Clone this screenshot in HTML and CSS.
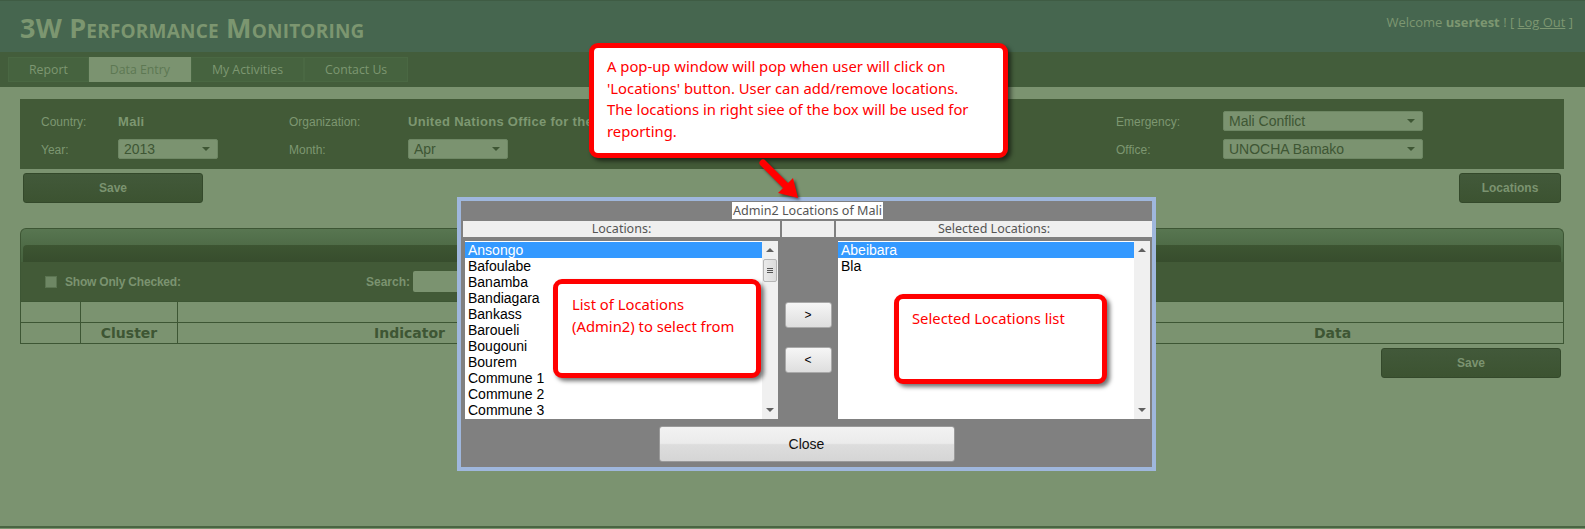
FILE: index.html
```html
<!DOCTYPE html>
<html lang="en">
<head>
<meta charset="utf-8">
<title>3W Performance Monitoring</title>
<link rel="stylesheet" href="styles.css">
</head>
<body>
<div class="page">
  <header class="topbar">
    <h1 class="brand">3W Performance Monitoring</h1>
    <div class="welcome">Welcome <b>usertest</b> ! [ <a href="#">Log Out</a> ]</div>
  </header>
  <nav class="tabs">
    <a class="tab" href="#">Report</a>
    <a class="tab active" href="#">Data Entry</a>
    <a class="tab" href="#">My Activities</a>
    <a class="tab" href="#">Contact Us</a>
  </nav>

  <main class="content">
    <section class="filters">
      <span class="flabel">Country:</span>
      <span class="fvalue">Mali</span>
      <span class="flabel">Organization:</span>
      <span class="fvalue">United Nations Office for the</span>
      <span class="flabel">Emergency:</span>
      <div class="select big"><span>Mali Conflict</span><i class="caret"></i></div>

      <span class="flabel">Year:</span>
      <div class="select"><span>2013</span><i class="caret"></i></div>
      <span class="flabel">Month:</span>
      <div class="select"><span>Apr</span><i class="caret"></i></div>
      <span class="flabel">Office:</span>
      <div class="select big"><span>UNOCHA Bamako</span><i class="caret"></i></div>
    </section>

    <div class="actions">
      <button class="btn btn-save">Save</button>
      <button class="btn btn-loc">Locations</button>
    </div>

    <section class="gridpanel">
      <div class="gp-head"><div class="gp-strip"></div></div>
      <div class="gp-tools">
        <label class="chk"><span class="box"></span>Show Only Checked:</label>
        <label class="search">Search: <span class="search-input"></span></label>
      </div>
      <table class="gp-table">
        <tr class="r1"><td class="c1"></td><td class="c2"></td><td colspan="3"></td></tr>
        <tr class="r2"><th class="c1"></th><th class="c2">Cluster</th><th class="c3">Indicator</th><th class="c4"></th><th class="c5">Data</th></tr>
      </table>
    </section>

    <div class="actions end">
      <button class="btn btn-save2">Save</button>
    </div>
  </main>

  <div class="popup">
    <div class="pop-title"><span>Admin2 Locations of Mali</span></div>
    <div class="pop-grid">
      <div class="pop-head">Locations:</div>
      <div class="pop-head"></div>
      <div class="pop-head">Selected Locations:</div>

      <div class="listbox">
        <div class="items">
          <div class="item sel">Ansongo</div>
          <div class="item">Bafoulabe</div>
          <div class="item">Banamba</div>
          <div class="item">Bandiagara</div>
          <div class="item">Bankass</div>
          <div class="item">Baroueli</div>
          <div class="item">Bougouni</div>
          <div class="item">Bourem</div>
          <div class="item">Commune 1</div>
          <div class="item">Commune 2</div>
          <div class="item">Commune 3</div>
        </div>
        <div class="sbar">
          <span class="arr up"></span>
          <span class="thumb"><i></i><i></i><i></i></span>
          <span class="arr down"></span>
        </div>
      </div>
      <div class="movers">
        <button class="mv">&gt;</button>
        <button class="mv">&lt;</button>
      </div>
      <div class="listbox">
        <div class="items">
          <div class="item sel">Abeibara</div>
          <div class="item">Bla</div>
        </div>
        <div class="sbar">
          <span class="arr up"></span>
          <span class="arr down"></span>
        </div>
      </div>
    </div>
    <div class="pop-foot"><button class="close">Close</button></div>
  </div>

  <div class="callout c-top">A pop-up window will pop when user will click on<br>'Locations' button. User can add/remove locations.<br>The locations in right siee of the box will be used for<br>reporting.</div>
  <div class="callout c-left">List of Locations<br>(Admin2) to select from</div>
  <div class="callout c-right">Selected Locations list</div>

  <svg class="arrow" width="52" height="48" viewBox="0 0 52 48">
    <line x1="8" y1="5" x2="31" y2="28" stroke="#ff0000" stroke-width="7" stroke-linecap="round"/>
    <polygon points="23,35 38,20 43,40" fill="#ff0000"/>
  </svg>
</div>
</body>
</html>
```
FILE: styles.css
```css
* { box-sizing: border-box; }
html, body { margin: 0; padding: 0; }
body {
  background: #7b9370;
  font-family: "Liberation Sans", Arial, sans-serif;
  width: 1585px;
  height: 529px;
  overflow: hidden;
}
.page {
  position: relative;
  height: 528px;
  border-bottom: 2px solid #4a6542;
}

/* header */
.topbar {
  height: 52px;
  background: #46664f;
  border-top: 1px solid #3f5c44;
  display: flex;
  justify-content: space-between;
  align-items: flex-start;
  padding: 0 12px 0 20px;
}
.brand {
  margin: 11px 0 0;
  font-family: "Open Sans", "Noto Sans", sans-serif;
  font-variant: small-caps;
  font-weight: 700;
  font-size: 27px;
  letter-spacing: 0.2px;
  color: #7c9670;
  line-height: 32px;
}
.welcome {
  margin-top: 12px;
  font-family: "Open Sans", "Noto Sans", sans-serif;
  font-size: 13px;
  color: #7d9771;
}
.welcome b { font-weight: 700; }
.welcome a { color: #7d9771; text-decoration: underline; }

/* tabs */
.tabs {
  height: 35px;
  background: #435d3b;
  padding: 5px 0 0 8px;
  display: flex;
}
.tab {
  height: 25px;
  line-height: 24px;
  padding: 0 20px;
  background: #46633f;
  border: 1px solid #4a6843;
  font-family: "Open Sans", "Noto Sans", sans-serif;
  font-size: 12.3px;
  color: #7d9771;
  text-decoration: none;
}
.tab.active { background: #7b9370; border-color: #7b9370; color: #5d7853; }

/* content */
.content { padding: 12px 21px 0 20px; }

.filters {
  background: #425a37;
  height: 70px;
  padding: 12px 0 0 21px;
  display: grid;
  grid-template-columns: 77px 171px 119px 708px 107px 200px;
  grid-template-rows: 20px 20px;
  row-gap: 8px;
  align-items: center;
}
.flabel { font-size: 12px; color: #7d9771; padding-top: 2px; }
.fvalue { font-size: 13px; font-weight: 700; color: #7d9771; letter-spacing: 0.3px; white-space: nowrap; padding-top: 1px; }
.select {
  width: 100px;
  height: 20px;
  background: #7b9370;
  border: 1px solid #6e8764;
  border-radius: 2px;
  display: flex;
  align-items: center;
  justify-content: space-between;
  padding: 0 7px 0 5px;
  font-size: 14px;
  color: #3e5634;
}
.select.big { width: 200px; }
.caret {
  width: 0; height: 0;
  border-left: 4px solid transparent;
  border-right: 4px solid transparent;
  border-top: 4px solid #3e5634;
}

.actions { display: flex; justify-content: space-between; margin-top: 4px; padding: 0 3px; }
.actions.end { justify-content: flex-end; margin-top: 4px; }
.btn {
  height: 30px;
  background: linear-gradient(#42593a, #3c5331);
  border: 1px solid #34492b;
  border-radius: 3px;
  color: #7b9370;
  font-family: "Liberation Sans", Arial, sans-serif;
  font-weight: 700;
  font-size: 12px;
  padding: 0;
}
.btn-save { width: 180px; }
.btn-loc { width: 102px; }
.btn-save2 { width: 180px; }

/* grid panel */
.gridpanel { margin-top: 25px; }
.gp-head {
  height: 34px;
  border: 1px solid #3d5634;
  border-bottom: none;
  border-radius: 6px 6px 0 0;
  background: linear-gradient(#587651, #45613d);
  padding: 16px 2px 0 2px;
}
.gp-strip {
  height: 18px;
  background: linear-gradient(#3d5532, #374d2d);
  border-radius: 4px 4px 0 0;
  border-bottom: 1px solid #587250;
}
.gp-tools {
  height: 39px;
  background: #425a37;
  border-left: 1px solid #3d5634;
  border-right: 1px solid #3d5634;
  display: flex;
  align-items: center;
  padding: 0 0 0 24px;
  font-size: 12px;
  font-weight: 700;
  color: #7b9370;
}
.chk { display: flex; align-items: center; width: 321px; letter-spacing: -0.2px; }
.box {
  width: 12px; height: 12px;
  background: #6e8764;
  border: 1px solid #5b7451;
  margin-right: 8px;
}
.search { display: flex; align-items: center; }
.search-input {
  width: 60px; height: 21px;
  background: #7b9370;
  border-radius: 2px;
  margin-left: 3px;
}
.gp-table {
  width: 100%;
  border-collapse: collapse;
}
.gp-table td, .gp-table th {
  border: 1px solid #3d5634;
  padding: 0;
}
.gp-table .r1 td { height: 21px; }
.gp-table .r2 th {
  height: 21px;
  font-family: "DejaVu Sans", Verdana, sans-serif;
  font-size: 14px;
  font-weight: 700;
  color: #3e5634;
}
.c1 { width: 60px; }
.c2 { width: 97px; }
.c3 { width: 464px; }
.c4 { width: 460px; }

/* popup */
.popup {
  position: absolute;
  left: 457px;
  top: 197px;
  width: 699px;
  height: 274px;
  background: #808080;
  border: 4px solid #9fb7dd;
  padding: 3px 0 0 2px;
  font-family: "Noto Sans", "Liberation Sans", sans-serif;
}
.pop-title { height: 14px; text-align: center; line-height: 14px; font-size: 12.6px; }
.pop-title span { background: #fff; color: #555; padding: 0 1px; }
.pop-grid {
  margin-top: 3px;
  display: grid;
  grid-template-columns: 317px 52px 316px;
  grid-template-rows: 16px 178px;
  column-gap: 2px;
  row-gap: 4px;
}
.pop-head {
  background: #efefef;
  color: #555;
  font-size: 12.5px;
  line-height: 16px;
  text-align: center;
}
.listbox {
  margin: 0 2px;
  background: #fff;
  display: flex;
}
.items { flex: 1; padding-top: 1px; }
.item {
  height: 16px;
  line-height: 16px;
  font-family: "Liberation Sans", Arial, sans-serif;
  font-size: 14px;
  color: #000;
  padding-left: 3px;
}
.item.sel { background: #3399ff; color: #fff; }
.sbar {
  width: 16px;
  background: #f0f0f0;
  position: relative;
}
.arr {
  position: absolute;
  left: 4px;
  width: 0; height: 0;
  border-left: 4px solid transparent;
  border-right: 4px solid transparent;
}
.arr.up { top: 7px; border-bottom: 4px solid #606060; }
.arr.down { bottom: 7px; border-top: 4px solid #606060; }
.thumb {
  position: absolute;
  top: 18px; left: 1px;
  width: 14px; height: 23px;
  background: linear-gradient(90deg, #eaeaea, #dcdcdc);
  border: 1px solid #b5b5b5;
  border-radius: 2px;
  display: flex;
  flex-direction: column;
  align-items: center;
  justify-content: center;
  gap: 1px;
}
.thumb i { display: block; width: 6px; height: 1px; background: #555; }
.movers {
  display: flex;
  flex-direction: column;
  align-items: center;
  padding-top: 61px;
  gap: 19px;
}
.mv {
  width: 47px;
  height: 26px;
  background: linear-gradient(#f6f6f6, #dedede);
  border: 1px solid #a9a9a9;
  border-radius: 3px;
  font-family: "Liberation Sans", Arial, sans-serif;
  font-size: 12px;
  color: #000;
  padding: 0;
}
.pop-foot { display: flex; justify-content: center; margin-top: 7px; padding-right: 2px; }
.close {
  width: 296px;
  height: 36px;
  background: linear-gradient(#f2f2f2 0%, #ebebeb 48%, #dddddd 52%, #d5d5d5 100%);
  border: 1px solid #9a9a9a;
  border-radius: 3px;
  font-family: "Liberation Sans", Arial, sans-serif;
  font-size: 14px;
  color: #111;
}

/* callouts */
.callout {
  position: absolute;
  background: #fff;
  border: 5px solid #ff0000;
  border-radius: 9px;
  box-shadow: 3px 3px 4px rgba(0, 0, 0, 0.55);
  color: #ff0000;
  font-family: "Noto Sans", "Open Sans", sans-serif;
  font-size: 14.8px;
  line-height: 21.5px;
  white-space: nowrap;
}
.c-top { left: 589px; top: 43px; width: 419px; height: 115px; padding: 8px 8px 0 13px; }
.c-left { left: 553px; top: 279px; width: 208px; height: 99px; padding: 10px 8px 0 14px; }
.c-right { left: 894px; top: 294px; width: 213px; height: 90px; padding: 9px 8px 0 13px; }

.arrow {
  position: absolute;
  left: 755px;
  top: 158px;
  filter: drop-shadow(2px 2px 1.5px rgba(0, 0, 0, 0.55));
}
```
